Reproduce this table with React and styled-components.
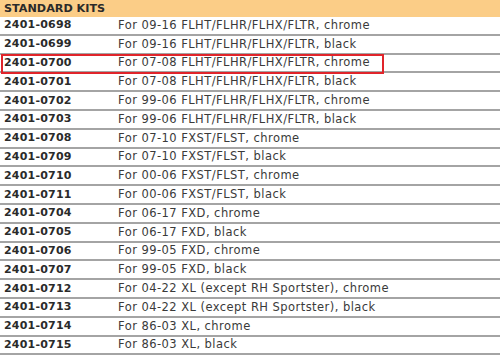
import styled, {createGlobalStyle} from 'styled-components';

const kits = [
  ['2401-0698', 'For 09-16 FLHT/FLHR/FLHX/FLTR, chrome'],
  ['2401-0699', 'For 09-16 FLHT/FLHR/FLHX/FLTR, black'],
  ['2401-0700', 'For 07-08 FLHT/FLHR/FLHX/FLTR, chrome', true],
  ['2401-0701', 'For 07-08 FLHT/FLHR/FLHX/FLTR, black'],
  ['2401-0702', 'For 99-06 FLHT/FLHR/FLHX/FLTR, chrome'],
  ['2401-0703', 'For 99-06 FLHT/FLHR/FLHX/FLTR, black'],
  ['2401-0708', 'For 07-10 FXST/FLST, chrome'],
  ['2401-0709', 'For 07-10 FXST/FLST, black'],
  ['2401-0710', 'For 00-06 FXST/FLST, chrome'],
  ['2401-0711', 'For 00-06 FXST/FLST, black'],
  ['2401-0704', 'For 06-17 FXD, chrome'],
  ['2401-0705', 'For 06-17 FXD, black'],
  ['2401-0706', 'For 99-05 FXD, chrome'],
  ['2401-0707', 'For 99-05 FXD, black'],
  ['2401-0712', 'For 04-22 XL (except RH Sportster), chrome'],
  ['2401-0713', 'For 04-22 XL (except RH Sportster), black'],
  ['2401-0714', 'For 86-03 XL, chrome'],
  ['2401-0715', 'For 86-03 XL, black'],
];

function App() {
  return (
    <>
      <GlobalStyle />
      <Table>
        <Header>STANDARD KITS</Header>
        {kits.map(([code, desc, marked]) => (
          <Row key={code} $marked={marked}>
            <Code>{code}</Code>
            <Desc>{desc}</Desc>
          </Row>
        ))}
      </Table>
    </>
  );
}

const GlobalStyle = createGlobalStyle`
  body {
    margin: 0;
    background: #fff;
    font-family: "DejaVu Sans", Verdana, sans-serif;
  }
`;

const Table = styled.div`
  width: 500px;
  display: flex;
  flex-direction: column;
`;

const Header = styled.div`
  height: 17px;
  background-color: #fbcd87;
  color: #2a2a2a;
  font-weight: bold;
  font-size: 11.2px;
  line-height: 17px;
  padding-left: 4px;
`;

const Row = styled.div`
  position: relative;
  box-sizing: border-box;
  height: 18.8px;
  display: grid;
  grid-template-columns: 114px 1fr;
  align-items: center;
  padding-left: 4px;
  padding-bottom: 1px;
  border-bottom: 2px solid #a4a4a4;
  font-size: 11px;

  &::after {
    content: '';
    display: ${(p) => (p.$marked ? 'block' : 'none')};
    position: absolute;
    left: 1px;
    top: -1px;
    width: 383px;
    height: 20px;
    box-sizing: border-box;
    border: 2px solid #e0242a;
  }
`;

const Code = styled.span`
  font-weight: bold;
  color: #2a2a2a;
  letter-spacing: 0.2px;
`;

const Desc = styled.span`
  color: #3a3a3a;
  font-size: 11.5px;
  letter-spacing: 0.45px;
`;

export default App;
